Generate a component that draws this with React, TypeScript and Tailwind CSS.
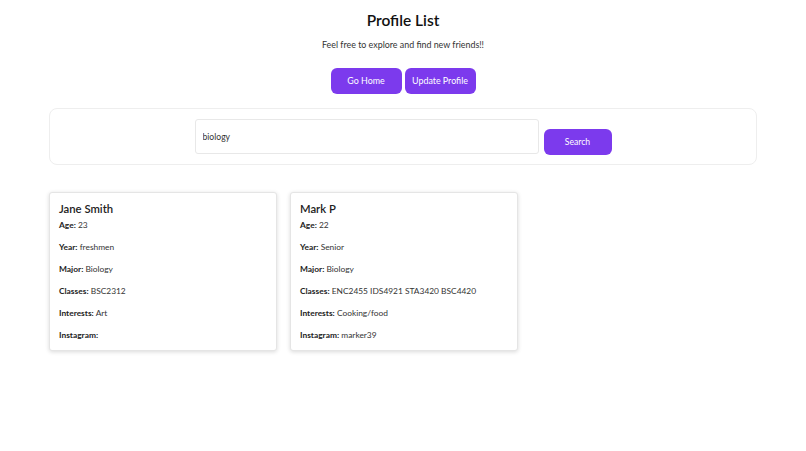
import React from 'react';

type Profile = {
  name: string;
  age: number;
  year: string;
  major: string;
  classes: string;
  interests: string;
  instagram: string;
};

const profiles: Profile[] = [
  { name: 'Jane Smith', age: 23, year: 'freshmen', major: 'Biology', classes: 'BSC2312', interests: 'Art', instagram: '' },
  { name: 'Mark P', age: 22, year: 'Senior', major: 'Biology', classes: 'ENC2455 IDS4921 STA3420 BSC4420', interests: 'Cooking/food', instagram: 'marker39' },
];

function Field({ label, value }: { label: string; value: string | number }) {
  return (
    <p className="text-[8.4px] leading-[12px] text-[#333]">
      <span className="font-bold text-[#222]">{label}:</span> {value}
    </p>
  );
}

function ProfileCard({ p }: { p: Profile }) {
  return (
    <div className="w-[228px] h-[159px] bg-white border border-[#e5e5e5] rounded-[3px] shadow-[0_1px_4px_rgba(0,0,0,0.15)] px-[9px] pt-[8px]">
      <h2 className="text-[11.3px] leading-[15px] font-semibold text-[#222] mb-[3px]">{p.name}</h2>
      <div className="flex flex-col gap-[10px]">
        <Field label="Age" value={p.age} />
        <Field label="Year" value={p.year} />
        <Field label="Major" value={p.major} />
        <Field label="Classes" value={p.classes} />
        <Field label="Interests" value={p.interests} />
        <Field label="Instagram" value={p.instagram} />
      </div>
    </div>
  );
}

export default function App() {
  return (
    <div className="min-h-screen bg-white font-['Lato',sans-serif] text-[#1a1a1a] px-[49px]">
      <div className="flex flex-col items-center pt-[9px]">
        <h1 className="text-[15.5px] leading-[22px] font-semibold text-[#111]">Profile List</h1>
        <p className="mt-[8px] text-[8.9px] leading-[12px] text-[#333]">Feel free to explore and find new friends!!</p>
        <div className="mt-[17px] flex gap-[3px]">
          <button className="w-[71px] h-[26px] rounded-[6px] bg-[#7c3aed] text-white text-[8.9px]">Go Home</button>
          <button className="w-[71px] h-[26px] rounded-[6px] bg-[#7c3aed] text-white text-[8.9px]">Update Profile</button>
        </div>
      </div>

      <div className="mt-[14px] h-[57px] border border-[#eeeeee] rounded-[8px] flex items-end justify-center gap-[5px] pb-[10px]">
        <input
          defaultValue="biology"
          className="w-[344px] h-[35px] border border-[#e8e8e8] rounded-[3px] px-[7px] text-[8.6px] text-[#333] outline-none"
        />
        <button className="w-[68px] h-[26px] rounded-[6px] bg-[#7c3aed] text-white text-[8.6px] mb-[-1px]">Search</button>
      </div>

      <div className="mt-[27px] flex gap-[13px]">
        {profiles.map((p) => (
          <ProfileCard key={p.name} p={p} />
        ))}
      </div>
    </div>
  );
}
